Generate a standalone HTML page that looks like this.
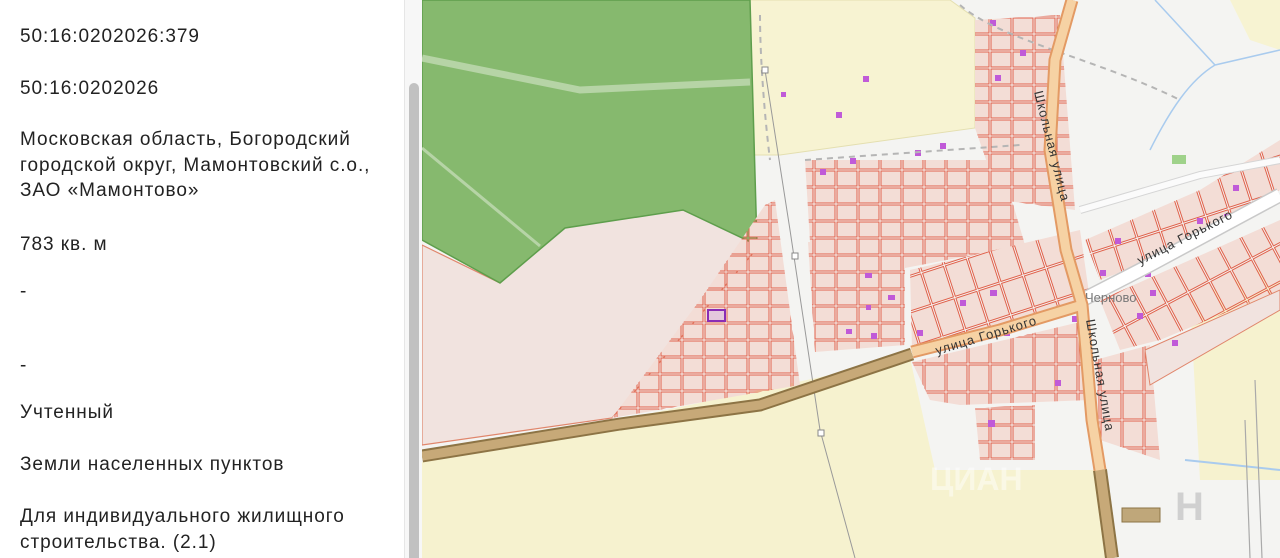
<!DOCTYPE html>
<html><head><meta charset="utf-8"><style>
html,body{margin:0;padding:0;width:1280px;height:558px;overflow:hidden;background:#fff;position:relative}
#panel{position:absolute;left:0;top:0;width:404px;height:558px;background:#fff;font-family:"Liberation Sans","DejaVu Sans",sans-serif;font-size:19px;letter-spacing:0.95px;color:#222}
#panel div{position:absolute;left:20px;line-height:25.5px;white-space:nowrap}
#track{position:absolute;left:404px;top:0;width:17px;height:558px;background:#f7f7f7;border-left:1px solid #e6e6e6}
#thumb{position:absolute;left:409px;top:83px;width:10px;height:475px;border-radius:5px 5px 0 0;background:#c1c1c1}
#map{position:absolute;left:422px;top:0}
</style></head><body>
<div id="panel">
<div style="top:24px">50:16:0202026:379</div>
<div style="top:76px">50:16:0202026</div>
<div style="top:127px">Московская область, Богородский<br>городской округ, Мамонтовский с.о.,<br>ЗАО «Мамонтово»</div>
<div style="top:232px">783 кв. м</div>
<div style="top:279px">-</div>
<div style="top:353px">-</div>
<div style="top:400px">Учтенный</div>
<div style="top:452px">Земли населенных пунктов</div>
<div style="top:504px">Для индивидуального жилищного<br>строительства. (2.1)</div>
</div>
<div id="track"></div><div id="thumb"></div>
<svg id="map" width="858" height="558" viewBox="422 0 858 558" xmlns="http://www.w3.org/2000/svg" font-family="Liberation Sans, DejaVu Sans, sans-serif">
<defs>
<pattern id="pl" width="22" height="17" patternUnits="userSpaceOnUse"><rect x="1" y="1" width="20" height="15" fill="#f3ddd6" stroke="#e0604a" stroke-width="1"/></pattern>
<pattern id="pl2" width="24" height="34" patternUnits="userSpaceOnUse" patternTransform="rotate(-18)"><rect x="1" y="1" width="22" height="32" fill="#f3ddd6" stroke="#e0604a" stroke-width="1"/></pattern>
<pattern id="pl3" width="24" height="34" patternUnits="userSpaceOnUse" patternTransform="rotate(-28)"><rect x="1" y="1" width="22" height="32" fill="#f3ddd6" stroke="#e0604a" stroke-width="1"/></pattern>
<pattern id="pl4" width="22" height="28" patternUnits="userSpaceOnUse"><rect x="1" y="1" width="20" height="26" fill="#f3ddd6" stroke="#e0604a" stroke-width="1"/></pattern>
</defs>
<rect x="422" y="0" width="858" height="558" fill="#f4f4f2"/>
<polygon points="750,0 950,0 975,18 975,128 780,155 752,155" fill="#f7f3d2" stroke="#e4dfb0"/>
<polygon points="422,462 910,358 935,470 1100,470 1112,558 422,558" fill="#f6f2cf"/>
<polygon points="1190,300 1280,260 1280,480 1200,480" fill="#f6f2cf"/>
<polygon points="1230,0 1280,0 1280,50 1250,40" fill="#f7f3d2"/>
<polygon points="422,245 500,283 565,225 683,210 760,245 612,418 422,445" fill="#f1e3df" stroke="#e0866c" stroke-width="1.2"/>
<polygon points="422,0 750,0 757,245 683,210 565,228 500,283 422,240" fill="#86b96e" stroke="#5e9e4c" stroke-width="1.5"/>
<polyline points="422,58 580,90 750,82" fill="none" stroke="#b6d4a6" stroke-width="7"/>
<line x1="422" y1="148" x2="540" y2="246" stroke="#b6d4a6" stroke-width="3"/>
<polygon points="612,418 700,300 765,205 775,200 800,385" fill="url(#pl)"/>
<polygon points="808,242 905,242 905,345 815,352" fill="url(#pl)"/>
<polygon points="805,160 1000,160 1025,245 905,268 810,242" fill="url(#pl)"/>
<polygon points="975,20 1060,15 1075,210 1000,200 975,128" fill="url(#pl)"/>
<polygon points="910,270 1080,230 1090,300 1000,335 912,350" fill="url(#pl2)"/>
<polygon points="912,362 1080,322 1090,400 960,405 930,400" fill="url(#pl4)"/>
<polygon points="975,408 1035,405 1035,460 980,460" fill="url(#pl)"/>
<polygon points="1085,240 1200,190 1280,140 1280,190 1140,265 1100,280" fill="url(#pl2)"/>
<polygon points="1100,300 1280,220 1280,290 1160,340 1120,350" fill="url(#pl3)"/>
<polygon points="1095,360 1150,345 1160,460 1100,440" fill="url(#pl4)"/>
<polygon points="1145,350 1280,290 1280,310 1150,385" fill="#f1e3df" stroke="#e0866c"/>
<rect x="708" y="310" width="17" height="11" fill="#e4c8dd" stroke="#8a2db5" stroke-width="2"/>
<g fill="#c05ad8">
<rect x="781" y="92" width="5" height="5"/><rect x="863" y="76" width="6" height="6"/><rect x="836" y="112" width="6" height="6"/>
<rect x="865" y="273" width="7" height="5"/><rect x="888" y="295" width="7" height="5"/><rect x="866" y="305" width="5" height="5"/><rect x="846" y="329" width="6" height="5"/><rect x="871" y="333" width="6" height="6"/>
<rect x="820" y="169" width="6" height="6"/><rect x="850" y="158" width="6" height="6"/><rect x="940" y="143" width="6" height="6"/><rect x="915" y="150" width="6" height="6"/>
<rect x="990" y="290" width="7" height="6"/><rect x="960" y="300" width="6" height="6"/><rect x="1004" y="330" width="6" height="6"/><rect x="917" y="330" width="6" height="6"/>
<rect x="988" y="420" width="7" height="7"/><rect x="1072" y="316" width="6" height="6"/><rect x="1055" y="380" width="6" height="6"/>
<rect x="1145" y="271" width="6" height="6"/><rect x="1174" y="245" width="6" height="6"/><rect x="1197" y="218" width="6" height="6"/><rect x="1224" y="214" width="6" height="6"/><rect x="1233" y="185" width="6" height="6"/>
<rect x="1137" y="313" width="6" height="6"/><rect x="1150" y="290" width="6" height="6"/><rect x="1172" y="340" width="6" height="6"/><rect x="1115" y="238" width="6" height="6"/><rect x="1100" y="270" width="6" height="6"/>
<rect x="995" y="75" width="6" height="6"/><rect x="1020" y="50" width="6" height="6"/><rect x="990" y="20" width="6" height="6"/>
</g>
<path d="M760,15 C760,60 765,120 770,160 M805,160 L1020,145 M960,5 C1000,40 1100,60 1180,100 1200,110" fill="none" stroke="#b5b5b5" stroke-width="2" stroke-dasharray="6,5"/>
<path d="M765,70 L790,230 L820,430 L855,558" fill="none" stroke="#999" stroke-width="1"/>
<g fill="#fff" stroke="#888"><rect x="762" y="67" width="6" height="6"/><rect x="792" y="253" width="6" height="6"/><rect x="818" y="430" width="6" height="6"/></g>
<path d="M1155,0 L1215,65 L1280,50 M1215,65 C1190,80 1170,110 1150,150 1120,180 1100,190" fill="none" stroke="#a9cbee" stroke-width="1.5"/>
<path d="M1185,460 L1280,470" fill="none" stroke="#a9cbee" stroke-width="2"/>
<path d="M1245,420 L1250,558 M1255,380 L1262,558" stroke="#aaa" stroke-width="1.2" fill="none"/>
<rect x="1172" y="155" width="14" height="9" fill="#9fd28a"/>
<polyline points="422,456 620,424 760,405 912,354" fill="none" stroke="#8d7445" stroke-width="13"/>
<polyline points="422,456 620,424 760,405 912,354" fill="none" stroke="#c7a978" stroke-width="9"/>
<polyline points="1100,470 1112,558" fill="none" stroke="#8d7445" stroke-width="14"/>
<polyline points="1100,470 1112,558" fill="none" stroke="#c7a978" stroke-width="10"/>
<polyline points="1082,300 1150,265 1280,195" fill="none" stroke="#c9c9c9" stroke-width="15"/>
<polyline points="1082,300 1150,265 1280,195" fill="none" stroke="#ffffff" stroke-width="12"/>
<polyline points="1080,210 1200,175 1280,160" fill="none" stroke="#d5d5d5" stroke-width="8"/>
<polyline points="1080,210 1200,175 1280,160" fill="none" stroke="#fbfbfb" stroke-width="6"/>
<g fill="none" stroke-linejoin="round">
<polyline points="1072,0 1055,60 1050,150 1066,250 1082,305 1086,350 1092,420 1100,470" stroke="#e39a64" stroke-width="13"/>
<polyline points="912,352 1000,330 1082,305" stroke="#e39a64" stroke-width="13"/>
<polyline points="1072,0 1055,60 1050,150 1066,250 1082,305 1086,350 1092,420 1100,470" stroke="#f6d2a4" stroke-width="9"/>
<polyline points="912,352 1000,330 1082,305" stroke="#f6d2a4" stroke-width="9"/>
</g>
<rect x="1122" y="508" width="38" height="14" fill="#bfa77a" stroke="#8d7445"/>
<text x="1175" y="520" font-size="40" fill="#d0d0d0" font-weight="bold">H</text>
<text font-size="13" fill="#333" letter-spacing="1" transform="translate(937,355) rotate(-17)">улица  Горького</text>
<text font-size="13" fill="#333" letter-spacing="1" transform="translate(1140,265) rotate(-27)">улица  Горького</text>
<text font-size="13" fill="#333" letter-spacing="1" transform="translate(1034,92) rotate(76)">Школьная  улица</text>
<text font-size="13" fill="#333" letter-spacing="1" transform="translate(1086,320) rotate(80)">Школьная  улица</text>
<text x="1085" y="302" font-size="13" fill="#777">Черново</text>
<text x="930" y="490" font-size="32" fill="#ffffff" fill-opacity="0.45" font-weight="bold">ЦИАН</text>
</svg>
</body></html>
